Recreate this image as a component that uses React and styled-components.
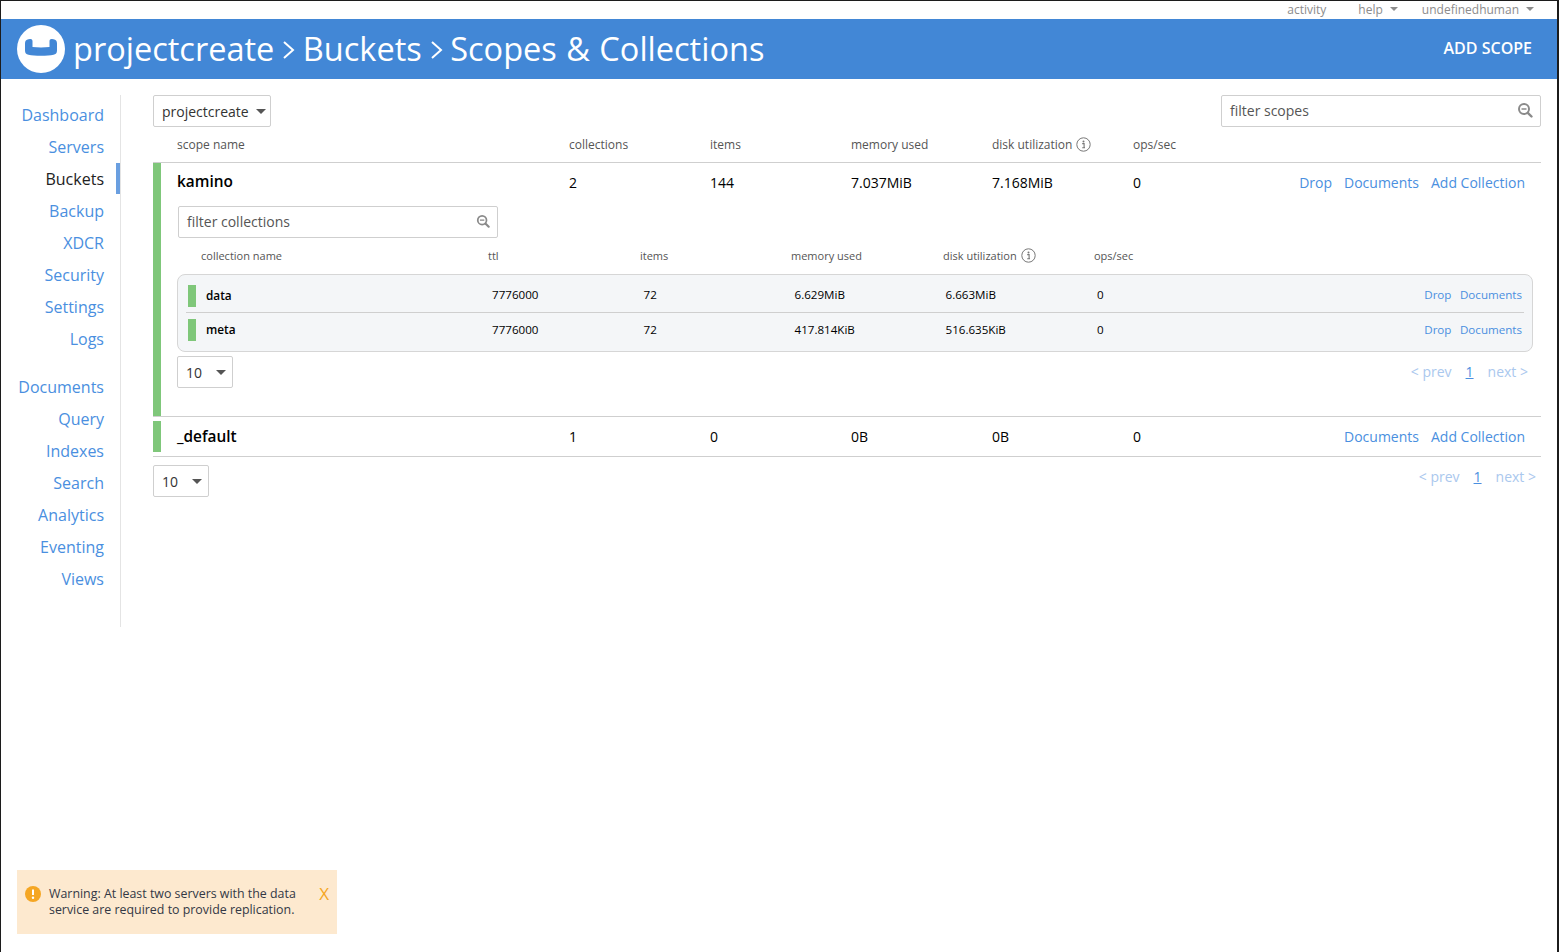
import React from 'react';
import styled, { createGlobalStyle } from 'styled-components';

const GlobalStyle = createGlobalStyle`
  html, body {
    margin: 0;
    padding: 0;
    background: #fff;
  }
  * {
    box-sizing: border-box;
  }
  body {
    font-family: "Open Sans", "Liberation Sans", sans-serif;
    color: #000;
  }
`;

const Page = styled.div`
  position: relative;
  height: 952px;
  border-top: 1px solid #1c1c1c;
  border-left: 1px solid #1c1c1c;
  border-right: 2px solid #1c1c1c;
  overflow: hidden;
`;

const TopBar = styled.div`
  height: 18px;
  display: flex;
  justify-content: flex-end;
  align-items: center;
  padding: 0 23px 2px 0;
  font-size: 12px;
  color: #8c8c8c;
`;

const TopLink = styled.span`
  display: flex;
  align-items: center;
  margin-left: ${(p) => p.$gap}px;
`;

const Caret = styled.span`
  display: inline-block;
  width: 0;
  height: 0;
  margin-left: ${(p) => p.$left || 7}px;
  border-left: ${(p) => p.$half || 4}px solid transparent;
  border-right: ${(p) => p.$half || 4}px solid transparent;
  border-top: ${(p) => p.$half || 4}px solid ${(p) => p.$color || '#8c8c8c'};
`;

const Header = styled.header`
  height: 60px;
  background: #4287d6;
  display: flex;
  align-items: center;
  padding: 0 25px 0 16px;
  color: #fff;
`;

const Crumbs = styled.div`
  flex: 1;
  display: flex;
  align-items: center;
  margin-left: 8px;
  font-size: 32.5px;
  line-height: 60px;
`;

const LastCrumb = styled.span`
  word-spacing: 1px;
`;

const Chevron = styled.svg`
  width: 13px;
  height: 22px;
  margin: 2px 7.5px 0 8px;
`;

const AddScope = styled.span`
  font-size: 16px;
  font-weight: 600;
  margin-top: -2px;
`;

const Body = styled.div`
  display: flex;
  align-items: flex-start;
  padding-top: 16px;
`;

const Sidebar = styled.nav`
  width: 120px;
  height: 532px;
  flex: none;
  border-right: 1px solid #e4e4e4;
`;

const NavGroup = styled.div`
  margin-bottom: ${(p) => p.$bottom || 0}px;
`;

const NavItem = styled.div`
  height: 32px;
  line-height: 40px;
  padding-right: 16px;
  text-align: right;
  font-size: 16px;
  color: ${(p) => (p.$active ? '#222' : '#4a8fe0')};
  position: relative;
  ${(p) =>
    p.$active &&
    `&::after {
      content: '';
      position: absolute;
      right: 0;
      top: 4px;
      width: 4px;
      height: 31px;
      background: #6a9fe0;
    }`}
`;

const Main = styled.main`
  width: 1388px;
  margin-left: 32px;
`;

const Toolbar = styled.div`
  display: flex;
  justify-content: space-between;
  align-items: flex-start;
`;

const Select = styled.div`
  height: 32px;
  width: ${(p) => p.$width}px;
  padding: 0 6px 0 8px;
  display: flex;
  align-items: center;
  justify-content: space-between;
  border: 1px solid #cfcfcf;
  border-radius: 2px;
  font-size: 14px;
  color: #333;
  background: #fff;
`;

const FilterBox = styled.div`
  height: 32px;
  width: ${(p) => p.$width}px;
  margin-left: ${(p) => p.$left || 0}px;
  padding: 0 7px 2px 8px;
  display: flex;
  align-items: center;
  justify-content: space-between;
  border: 1px solid #cfcfcf;
  border-radius: 2px;
  font-size: 14px;
  color: #555;
  background: #fff;
`;

const ScopeColumns = styled.div`
  display: grid;
  grid-template-columns: 392px repeat(5, 141px) 1fr;
  align-items: center;
`;

const ScopeHead = styled(ScopeColumns)`
  height: 36px;
  padding: 0 0 1px 24px;
  font-size: 12px;
  color: #555;
  border-bottom: 1px solid #cfcfcf;
`;

const HeadLabel = styled.span`
  display: flex;
  align-items: center;
  gap: 4px;
`;

const ScopeBlock = styled.section`
  display: flex;
  flex-direction: column;
  border-bottom: 1px solid #cfcfcf;
  padding: ${(p) => (p.$open ? '0' : '4px 0 4px')};
`;

const ScopeInner = styled.div`
  border-left: 8px solid #7fc77a;
  padding-left: 16px;
  height: ${(p) => p.$height}px;
  ${(p) => p.$open && 'padding-right: 8px;'}
`;

const ScopeRow = styled(ScopeColumns)`
  height: ${(p) => p.$height}px;
  padding-bottom: ${(p) => p.$bottom || 0}px;
  font-size: 14px;
`;

const ScopeName = styled.span`
  font-size: 15.4px;
  font-weight: 600;
  margin-top: -1px;
`;

const Actions = styled.div`
  display: flex;
  justify-content: flex-end;
  gap: ${(p) => p.$gap}px;
  padding-right: ${(p) => p.$right}px;
  font-size: ${(p) => p.$size}px;
  color: #4a8fe0;
`;

const CollectionHead = styled.div`
  display: grid;
  grid-template-columns: 287px 152px 151px 152px 151px 1fr;
  align-items: center;
  height: 36px;
  padding: 0 0 2px 24px;
  font-size: 11px;
  color: #555;
`;

const CollectionPanel = styled.div`
  width: 1356px;
  height: 78px;
  padding: 4px 8px 0 8px;
  background: #f4f6f8;
  border: 1px solid #d6d6d6;
  border-radius: 8px;
`;

const CollectionRow = styled.div`
  display: grid;
  grid-template-columns: 18px 286px 151.5px 151px 151px 151.5px 1fr;
  align-items: center;
  height: ${(p) => p.$height}px;
  padding: 0 0 2px 2px;
  font-size: 11.6px;
  ${(p) => !p.$last && 'border-bottom: 1px solid #cfcfcf;'}
`;

const StatusBar = styled.span`
  width: 8px;
  height: 22px;
  margin-top: 2px;
  background: #7fc77a;
`;

const CollectionName = styled.span`
  font-size: 11.8px;
  font-weight: 600;
`;

const OpsCell = styled.div`
  display: flex;
  justify-content: space-between;
  align-items: center;
`;

const PagerRow = styled.div`
  display: flex;
  justify-content: space-between;
  align-items: flex-start;
  margin-top: ${(p) => p.$top}px;
  padding-right: ${(p) => p.$right}px;
`;

const Pager = styled.div`
  display: flex;
  align-items: center;
  gap: 14px;
  margin-top: ${(p) => p.$lift || 0}px;
  font-size: 14px;
  line-height: 32px;
  color: #aac8ee;
`;

const PageNum = styled.span`
  color: #4a8fe0;
  text-decoration: underline;
`;

const Toast = styled.div`
  position: absolute;
  left: 16px;
  top: 869px;
  width: 320px;
  height: 64px;
  padding: 0 8px;
  display: flex;
  align-items: center;
  background: #fde9cf;
  font-size: 12.4px;
  font-weight: 500;
  line-height: 16px;
  color: #333845;
`;

const ToastIcon = styled.svg`
  width: 16px;
  height: 16px;
  flex: none;
  margin: -17px 8px 0 0;
`;

const ToastText = styled.div`
  flex: 1;
`;

const ToastClose = styled.span`
  font-size: 17px;
  font-weight: 400;
  color: #f5a623;
  margin-top: -16px;
`;

const SearchIcon = ({ size = 16 }) => (
  <svg width={size} height={size} viewBox="0 0 16 16" fill="none" stroke="#8a8a8a">
    <circle cx="7" cy="7" r="5" strokeWidth="2" />
    <path d="M4.5 7h5" strokeWidth="1.5" />
    <path d="M10.8 10.8l3.7 3.7" strokeWidth="2.4" strokeLinecap="round" />
  </svg>
);

const InfoIcon = ({ size = 15 }) => (
  <svg width={size} height={size} viewBox="0 0 15 15" fill="none">
    <circle cx="7.5" cy="7.5" r="6.7" stroke="#777" />
    <circle cx="7.5" cy="4.4" r="1" fill="#777" />
    <path d="M6.2 6.6h1.9v3.9M6.2 10.8h2.8" stroke="#777" strokeWidth="1.1" />
  </svg>
);

const Logo = () => (
  <svg width="48" height="48" viewBox="0 0 48 48">
    <circle cx="24" cy="24" r="24" fill="#fff" />
    <path
      d="M8 18.500c0-2.500 1.200-4 3.500-4.300L13 14c1.500-.2 2.500.6 2.500 2.200V22c5 .5 12 .5 17 0v-5.800c0-1.600 1-2.400 2.500-2.200l1.500.2c2.300.3 3.500 1.800 3.500 4.300v7c0 2.500-1.200 3.800-3.500 4.200-3 .6-7.500 1-12.500 1s-9.500-.4-12.500-1C9.200 29.300 8 28 8 25.500z"
      fill="#4287d6"
    />
  </svg>
);

const CrumbChevron = () => (
  <Chevron viewBox="0 0 13 22" fill="none" stroke="#fff" strokeWidth="2">
    <path d="M2 3l9 8-9 8" />
  </Chevron>
);

const Pagination = ({ lift }) => (
  <Pager $lift={lift}>
    <span>&lt; prev</span>
    <PageNum>1</PageNum>
    <span>next &gt;</span>
  </Pager>
);

const navTop = ['Dashboard', 'Servers', 'Buckets', 'Backup', 'XDCR', 'Security', 'Settings', 'Logs'];
const navBottom = ['Documents', 'Query', 'Indexes', 'Search', 'Analytics', 'Eventing', 'Views'];

const collections = [
  { name: 'data', ttl: '7776000', items: '72', memory: '6.629MiB', disk: '6.663MiB', ops: '0', height: 34 },
  { name: 'meta', ttl: '7776000', items: '72', memory: '417.814KiB', disk: '516.635KiB', ops: '0', height: 34, last: true },
];

export default function App() {
  return (
    <Page>
      <GlobalStyle />
      <TopBar>
        <TopLink $gap={0}>activity</TopLink>
        <TopLink $gap={32}>help<Caret /></TopLink>
        <TopLink $gap={24}>undefinedhuman<Caret /></TopLink>
      </TopBar>
      <Header>
        <Logo />
        <Crumbs>
          projectcreate
          <CrumbChevron />
          Buckets
          <CrumbChevron />
          <LastCrumb>Scopes &amp; Collections</LastCrumb>
        </Crumbs>
        <AddScope>ADD SCOPE</AddScope>
      </Header>
      <Body>
        <Sidebar>
          <NavGroup $bottom={16}>
            {navTop.map((n) => (
              <NavItem key={n} $active={n === 'Buckets'}>{n}</NavItem>
            ))}
          </NavGroup>
          <NavGroup>
            {navBottom.map((n) => (
              <NavItem key={n}>{n}</NavItem>
            ))}
          </NavGroup>
        </Sidebar>
        <Main>
          <Toolbar>
            <Select $width={118}>projectcreate<Caret $color="#555" $left={0} $half={5} /></Select>
            <FilterBox $width={320}>filter scopes<SearchIcon /></FilterBox>
          </Toolbar>
          <ScopeHead>
            <span>scope name</span>
            <span>collections</span>
            <span>items</span>
            <span>memory used</span>
            <HeadLabel>disk utilization <InfoIcon /></HeadLabel>
            <span>ops/sec</span>
          </ScopeHead>
          <ScopeBlock $open>
            <ScopeInner $height={253} $open>
              <ScopeRow $height={43} $bottom={5}>
                <ScopeName>kamino</ScopeName>
                <span>2</span>
                <span>144</span>
                <span>7.037MiB</span>
                <span>7.168MiB</span>
                <span>0</span>
                <Actions $gap={12} $right={8} $size={14}>
                  <span>Drop</span>
                  <span>Documents</span>
                  <span>Add Collection</span>
                </Actions>
              </ScopeRow>
              <FilterBox $width={320} $left={1}>filter collections<SearchIcon size={14} /></FilterBox>
              <CollectionHead>
                <span>collection name</span>
                <span>ttl</span>
                <span>items</span>
                <span>memory used</span>
                <HeadLabel>disk utilization <InfoIcon /></HeadLabel>
                <span>ops/sec</span>
              </CollectionHead>
              <CollectionPanel>
                {collections.map((c) => (
                  <CollectionRow key={c.name} $height={c.height} $last={c.last}>
                    <StatusBar />
                    <CollectionName>{c.name}</CollectionName>
                    <span>{c.ttl}</span>
                    <span>{c.items}</span>
                    <span>{c.memory}</span>
                    <span>{c.disk}</span>
                    <OpsCell>
                      <span>{c.ops}</span>
                      <Actions $gap={8.5} $right={2} $size={11.6}>
                        <span>Drop</span>
                        <span>Documents</span>
                      </Actions>
                    </OpsCell>
                  </CollectionRow>
                ))}
              </CollectionPanel>
              <PagerRow $top={4} $right={5}>
                <Select $width={56}>10<Caret $color="#555" $left={0} $half={5} /></Select>
                <Pagination />
              </PagerRow>
            </ScopeInner>
          </ScopeBlock>
          <ScopeBlock>
            <ScopeInner $height={31}>
              <ScopeRow $height={31}>
                <ScopeName>_default</ScopeName>
                <span>1</span>
                <span>0</span>
                <span>0B</span>
                <span>0B</span>
                <span>0</span>
                <Actions $gap={12} $right={16} $size={14}>
                  <span>Documents</span>
                  <span>Add Collection</span>
                </Actions>
              </ScopeRow>
            </ScopeInner>
          </ScopeBlock>
          <PagerRow $top={8} $right={5}>
            <Select $width={56}>10<Caret $color="#555" $left={0} $half={5} /></Select>
            <Pagination lift={-4} />
          </PagerRow>
        </Main>
      </Body>
      <Toast>
        <ToastIcon viewBox="0 0 16 16">
          <circle cx="8" cy="8" r="8" fill="#f5a623" />
          <path d="M8 3.500v5.500" stroke="#fff" strokeWidth="2" />
          <circle cx="8" cy="11.800" r="1.200" fill="#fff" />
        </ToastIcon>
        <ToastText>
          Warning: At least two servers with the data service are required to provide replication.
        </ToastText>
        <ToastClose>X</ToastClose>
      </Toast>
    </Page>
  );
}
